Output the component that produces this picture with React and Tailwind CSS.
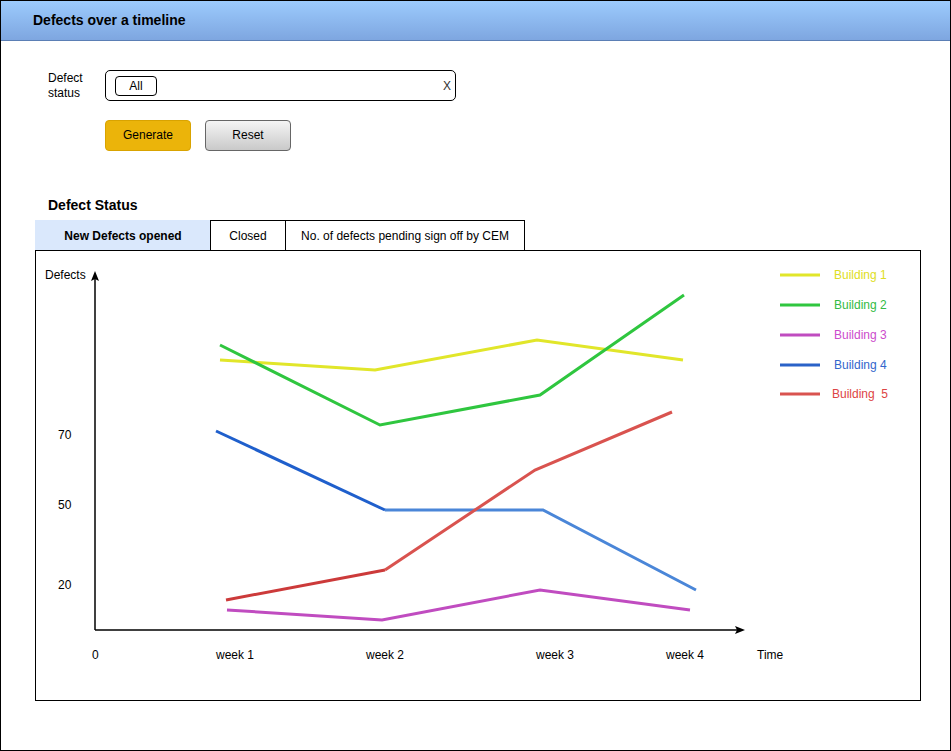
import React from "react";

const series = [
  { name: "Building 1", color: "#e1e62a", text: "#dede22", pts: [[220, 360], [375, 370], [537, 340], [683, 360]] },
  { name: "Building 2", color: "#2fc63f", text: "#33bb44", pts: [[220, 345], [380, 425], [540, 395], [684, 295]] },
  { name: "Building 3", color: "#c04cc0", text: "#cc4ccc", pts: [[227, 610], [382, 620], [540, 590], [690, 610]] },
  { name: "Building 4", color: "#4a86d8", text: "#3366cc", pts: [[385, 510], [543, 510], [696, 590]] },
  { name: "Building\u00a0 5", color: "#d9534f", text: "#dd4444", pts: [[385, 570], [535, 470], [672, 412]] },
];

const Chart = () => {
  const line = (pts) => pts.map((p) => p.join(",")).join(" ");
  return (
    <svg width="884" height="449" viewBox="36 251 884 449" className="block">
      <g fontFamily="'Liberation Sans', Arial, sans-serif" fontSize="12">
        {/* axes */}
        <line x1="95" y1="630" x2="95" y2="278" stroke="#000" strokeWidth="1.5" />
        <polygon points="95,271 91,281 95,279 99,281" fill="#000" />
        <line x1="95" y1="630" x2="738" y2="630" stroke="#000" strokeWidth="1.5" />
        <polygon points="745,630 735,626 737,630 735,634" fill="#000" />

        <text x="45" y="279" fill="#000">Defects</text>
        <text x="58" y="439" fill="#000">70</text>
        <text x="58" y="509" fill="#000">50</text>
        <text x="58" y="589" fill="#000">20</text>

        <text x="92" y="659" fill="#000">0</text>
        <text x="216" y="659" fill="#000">week 1</text>
        <text x="366" y="659" fill="#000">week 2</text>
        <text x="536" y="659" fill="#000">week 3</text>
        <text x="666" y="659" fill="#000">week 4</text>
        <text x="757" y="659" fill="#000">Time</text>

        {/* darker first segments */}
        <polyline points="216,431 385,510" fill="none" stroke="#1f5fcc" strokeWidth="3" />
        <polyline points="226,600 385,570" fill="none" stroke="#cc3a3a" strokeWidth="3" />

        {series.map((s) => (
          <polyline key={s.name} points={line(s.pts)} fill="none" stroke={s.color} strokeWidth="3" />
        ))}

        {/* legend */}
        {series.map((s, i) => (
          <g key={"l" + i}>
            <line
              x1="780"
              x2="820"
              y1={275 + i * 30 - (i === 4 ? 1 : 0)}
              y2={275 + i * 30 - (i === 4 ? 1 : 0)}
              stroke={i === 3 ? "#2a62c8" : s.color}
              strokeWidth="3"
            />
            <text x={i === 4 ? 832 : 834} y={279 + i * 30 - (i === 4 ? 1 : 0)} fill={s.text}>
              {s.name}
            </text>
          </g>
        ))}
      </g>
    </svg>
  );
};

const App = () => {
  return (
    <div className="w-[951px] h-[751px] border border-black bg-white font-['Liberation_Sans',Arial,sans-serif] text-black">
      <div className="h-[40px] flex items-center pl-[32px] bg-gradient-to-b from-[#9ccbfd] to-[#7ea6e0] border-b border-[#5b7fb5]">
        <p className="text-[14px] font-bold">Defects over a timeline</p>
      </div>

      <div className="pt-[29px] pl-[47px]">
        <div className="flex items-center">
          <p className="w-[57px] text-[12px] leading-[15px]">
            Defect
            <br />
            status
          </p>
          <div className="w-[351px] h-[31px] border border-black rounded-[5px] flex items-center justify-between pl-[9px] pr-[4px]">
            <span className="w-[42px] h-[20px] border border-black rounded-[4px] flex items-center justify-center text-[12px] leading-none">
              All
            </span>
            <span className="text-[12px] text-[#333]">X</span>
          </div>
        </div>

        <div className="flex gap-[14px] ml-[57px] mt-[19px]">
          <button className="w-[86px] h-[31px] rounded-[4px] bg-[#ebb40a] border border-[#d9a300] text-[12px] leading-none pb-px">
            Generate
          </button>
          <button className="w-[86px] h-[31px] rounded-[4px] bg-gradient-to-b from-[#f5f5f5] to-[#c9c9c9] border border-[#666] text-[12px] leading-none pb-px">
            Reset
          </button>
        </div>

        <p className="mt-[46px] text-[14px] font-bold leading-[17px]">Defect Status</p>
      </div>

      <div className="ml-[34px] mt-[6px]">
        <div className="flex text-[12px]">
          <div className="w-[175px] h-[30px] flex items-center justify-center bg-[#dae8fc] border-t border-l border-[#dae8fc] font-bold">
            New Defects opened
          </div>
          <div className="w-[76px] h-[30px] flex items-center justify-center border border-black border-b-0">
            Closed
          </div>
          <div className="w-[239px] h-[30px] flex items-center justify-center border border-black border-l-0 border-b-0">
            No. of defects pending sign off by CEM
          </div>
        </div>
        <div className="w-[886px] h-[451px] border border-black">
          <Chart />
        </div>
      </div>
    </div>
  );
};

export default App;
